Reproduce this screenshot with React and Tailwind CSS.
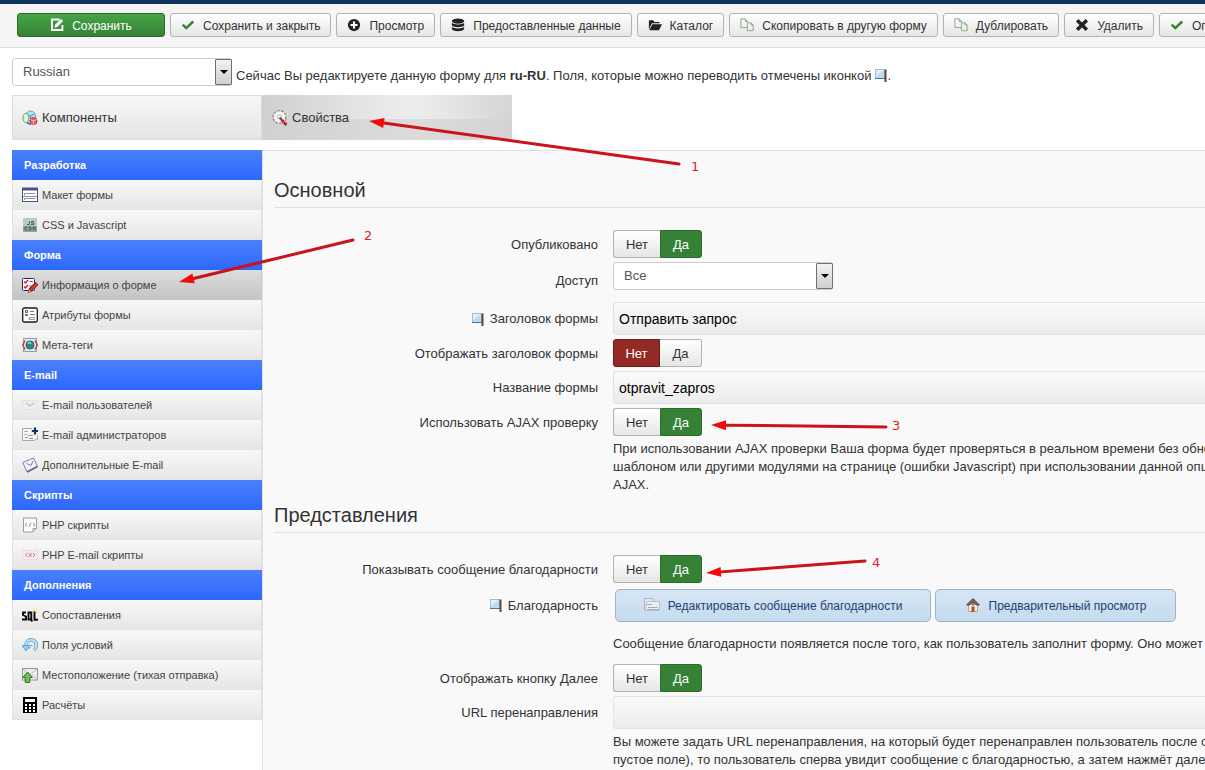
import { useState } from "react";

const svgProps = { width: 16, height: 16, viewBox: "0 0 16 16", fill: "none", "aria-hidden": true, className: "shrink-0" };

function EditIcon() {
  return (
    <svg {...svgProps} width={14} height={14}>
      <path d="M11 1.8H2.2v12h12V8" stroke="#fff" strokeWidth="2.2" />
      <path d="M5 11l.8-3.2L12.6 1 15 3.4 8.200 10.200z" fill="#fff" />
    </svg>
  );
}

function CheckIcon() {
  return (
    <svg {...svgProps} width={14} height={14}>
      <path d="M2 7.500l4 4L14 4" stroke="#378137" strokeWidth="2.800" />
    </svg>
  );
}

function PlusIcon() {
  return (
    <svg {...svgProps} width={14} height={14}>
      <circle cx="8" cy="8" r="7" fill="#222" />
      <path d="M8 4v8M4 8h8" stroke="#fff" strokeWidth="2.400" />
    </svg>
  );
}

function DatabaseIcon() {
  return (
    <svg {...svgProps} width={14} height={14}>
      <ellipse cx="8" cy="3.500" rx="7" ry="3" fill="#222" />
      <path d="M1 5.500c2 2.400 12 2.400 14 0v3c-2 2.600-12 2.600-14 0zM1 10c2 2.600 12 2.600 14 0v2.800c-2 3-12 3-14 0z" fill="#222" />
    </svg>
  );
}

function FolderIcon() {
  return (
    <svg {...svgProps} width={14} height={14}>
      <path d="M1 13V2.500h5l1.500 2H13V6H4.500L1 13z" fill="#222" />
      <path d="M1.500 14L5 7h11l-3.500 7z" fill="#222" />
    </svg>
  );
}

function CopyIcon() {
  return (
    <svg {...svgProps} width={14} height={14}>
      <path d="M8 11H1V1h5l2.500 2.500V5M6 1v3h2.500" stroke="#8a9a8a" />
      <path d="M8.500 5.500h4L15 8v6.500H8.500zM12.500 5.500V8H15" stroke="#7fa37f" />
    </svg>
  );
}

function CrossIcon() {
  return (
    <svg {...svgProps} width={14} height={14}>
      <path d="M2.500 2.500l11 11M13.500 2.500l-11 11" stroke="#222" strokeWidth="4" />
    </svg>
  );
}

function FlagIcon() {
  return (
    <svg width="12" height="13" viewBox="0 0 12 13" className="inline-block shrink-0" aria-hidden="true">
      <rect x="0.500" y="0.500" width="9" height="9" fill="#b9dcf3" stroke="#9dbfd6" />
      <path d="M0 9.500h10" stroke="#54728a" />
      <path d="M1 1h8L1 7z" fill="#dff0fb" />
      <path d="M10.500 0.500v12.500" stroke="#5f4530" strokeWidth="2" />
    </svg>
  );
}

function ComponentsIcon() {
  return (
    <svg {...svgProps}>
      <circle cx="8.500" cy="6" r="5" fill="#b9e2f5" stroke="#5fa5cb" />
      <path d="M5 4l3.500 2L12 4M8.500 6v5" stroke="#4b98c4" />
      <ellipse cx="4" cy="8" rx="3" ry="4.500" fill="#d6f0d2" stroke="#6dab74" />
      <path d="M3 5l1.500 2.500-.5 4" stroke="#fff" />
      <circle cx="11.500" cy="11" r="3.500" fill="#e0645e" stroke="#b53c3c" />
      <path d="M8.500 9.500l3 1.500 3-1.500M11.500 11v3.500" stroke="#f8c8c4" />
      <path d="M8.500 14.500l-3.500-2" stroke="#4f62b0" strokeWidth="1.500" />
    </svg>
  );
}

function PropertiesIcon() {
  return (
    <svg {...svgProps}>
      <circle cx="7.500" cy="7" r="6.300" fill="#f4f4f4" stroke="#8f8f8f" strokeWidth="1.600" strokeDasharray="2.600 1.200" />
      <circle cx="7.500" cy="7" r="5.500" fill="#f4f4f4" />
      <circle cx="7.500" cy="7" r="2" fill="#fff" stroke="#b5b5b5" />
      <path d="M7.500 7.500L11 11" stroke="#8f3a3a" strokeWidth="1.800" />
      <path d="M9.500 10l5 5" stroke="#b8242f" strokeWidth="3" />
      <path d="M14.500 9.500l-4 4" stroke="#c9898d" />
    </svg>
  );
}

function LayoutIcon() {
  return (
    <svg {...svgProps}>
      <rect x="0.500" y="1.500" width="15" height="13" fill="#fff" stroke="#4b5577" />
      <path d="M0 2h16" stroke="#4b5577" strokeWidth="3" />
      <path d="M2.500 8.500v-2h11M1 9.500h14M2.500 13v-1.500h11" stroke="#8b93ab" />
    </svg>
  );
}

function CssIcon() {
  return (
    <svg {...svgProps}>
      <rect x="1" y="1" width="14" height="14" fill="#b8c9c7" />
      <path d="M1 9h14v6H1z" fill="#93a7a5" />
      <path d="M7.500 4v3.500H5M12 4.500H9.500V6H12v1.500H9M5.500 10H3v3h2.500M9.500 10H7v1.500h2V13H6.500M13.500 10H11v1.500h2.500V13H10.500" stroke="#52615f" />
    </svg>
  );
}

function FormInfoIcon() {
  return (
    <svg {...svgProps}>
      <rect x="0.500" y="1.500" width="12" height="12" rx="1" fill="#fff" stroke="#2a2a52" />
      <path d="M2 4.500l1.500 1.500 2.500-3M2 9.500l1.500 1.500 2.500-3" stroke="#d0202a" strokeWidth="1.500" />
      <path d="M7.500 4.500H11M7.500 9H10" stroke="#7a5a8a" />
      <path d="M15 6.500L8 13" stroke="#6b1a1a" strokeWidth="4" />
      <path d="M14.500 7L8.500 12.600" stroke="#e0342c" strokeWidth="2.400" />
      <path d="M6 15.500l.8-3.500 2.400 2.500z" fill="#f3d9a0" stroke="#6b1a1a" strokeWidth="0.600" />
    </svg>
  );
}

function AttributesIcon() {
  return (
    <svg {...svgProps}>
      <rect x="0.700" y="1" width="14.600" height="14" rx="1.500" fill="#fff" stroke="#1c1c1c" strokeWidth="1.300" />
      <path d="M3.500 3.500h2v2h-2zM3.500 7.500h2v1h-2z" stroke="#555" />
      <path d="M8 4.500h4M8 7.500h5" stroke="#777" />
      <path d="M7 10.500h5.500v2H7z" stroke="#999" />
    </svg>
  );
}

function MetaIcon() {
  return (
    <svg {...svgProps}>
      <rect x="1.500" y="1.500" width="13" height="13" fill="#dbe8ee" stroke="#8aa0ad" />
      <circle cx="8" cy="8" r="4" fill="#2f8b8b" stroke="#1f5f6b" />
      <path d="M6 6.500c1-1.500 3-1 2.500.5" stroke="#9be0cc" strokeWidth="1.500" />
      <path d="M3 3.500L.8 8 3 12.500M13 3.500L15.200 8 13 12.500" stroke="#cc3232" strokeWidth="1.400" />
    </svg>
  );
}

function MailUserIcon() {
  return (
    <svg {...svgProps}>
      <rect x="0.500" y="3.500" width="15" height="9" fill="#eeeeee" stroke="#e2e2e2" />
      <path d="M4 6l4 3 4-3" stroke="#bdbdbd" strokeWidth="1.300" />
    </svg>
  );
}

function MailAdminIcon() {
  return (
    <svg {...svgProps}>
      <path d="M10 1.500H.5v12h12l3-3V8" fill="#f6f6f6" stroke="#a9a9a9" />
      <path d="M15.500 8v5" stroke="#a9b8c8" />
      <path d="M2.500 4.500h3M2.500 7.500h2M6 8.500h5M3 10.500h3M7 11.500h4" stroke="#8f98a4" />
      <path d="M13 .5v7M9.800 4h6.200" stroke="#15306b" strokeWidth="2.200" />
    </svg>
  );
}

function MailExtraIcon() {
  return (
    <svg {...svgProps}>
      <path d="M.8 5.500L11.500 1l4 8.500L5 15z" fill="#f2f2fc" stroke="#8080a8" />
      <path d="M4.500 6.500l4.500 2L11 4" stroke="#7f7fb0" />
      <path d="M5 15l10.500-5.500" stroke="#62629c" strokeWidth="1.800" />
    </svg>
  );
}

function PhpIcon() {
  return (
    <svg {...svgProps}>
      <path d="M1.500 1h13v10.500l-3.500 3.500H1.500z" fill="#fbfbfb" stroke="#9c9c9c" />
      <path d="M11 15v-3.500h3.500" fill="#ddd" stroke="#9c9c9c" />
      <path d="M5 6L3 7.800 5 9.500M11 6l2 1.800L11 9.500M9 5.500L7 10" stroke="#c08484" />
    </svg>
  );
}

function PhpMailIcon() {
  return (
    <svg {...svgProps}>
      <rect x="0.500" y="3.500" width="15" height="9" fill="#f6e9ea" stroke="#ecdfe1" />
      <path d="M5.500 6L3.500 8l2 2M11 6l2 2-2 2M9.500 6L7 10M7 6.500l2.500 3" stroke="#c07a88" />
    </svg>
  );
}

function SqlIcon() {
  return (
    <svg {...svgProps}>
      <circle cx="13" cy="3.500" r="3" fill="#f7ecc0" />
      <path d="M4 5.500H1v2.500l3 1.500v3H0" stroke="#0a0a0a" strokeWidth="1.900" />
      <path d="M6.500 5.500h2.800v7H6.500zM8.500 12l1.800 2.500" stroke="#0a0a0a" strokeWidth="1.900" />
      <path d="M12.500 4.500v8.200H16" stroke="#0a0a0a" strokeWidth="1.900" />
    </svg>
  );
}

function ConditionIcon() {
  return (
    <svg {...svgProps}>
      <path d="M4 9.500C3.500 4 8 2 11 3.200c4 1.600 4.300 7.300 1 10.300" stroke="#5fa8d6" strokeWidth="3.600" />
      <path d="M4 9.500C3.500 4 8 2 11 3.200c4 1.600 4.300 7.300 1 10.300" stroke="#c4e4f6" strokeWidth="1.800" />
      <path d="M0 8.500h8L4 14z" fill="#8ecbed" stroke="#5fa8d6" />
      <path d="M7.500 12V8.500h3" stroke="#79b7de" strokeWidth="1.500" />
    </svg>
  );
}

function LocationIcon() {
  return (
    <svg {...svgProps}>
      <rect x="0.500" y="1.500" width="15" height="11.500" fill="#eceeee" stroke="#8f9c93" />
      <path d="M1 2l7 5.500L15 2M15 12.500L10 7" stroke="#b6c0ba" />
      <path d="M5.500 5L10.500 10.500H7.800V15.500H3.200v-5H.8z" fill="#6fc04c" stroke="#35722b" />
    </svg>
  );
}

function CalcIcon() {
  return (
    <svg {...svgProps}>
      <path d="M1 0h14v16H1z" fill="#000" />
      <path d="M3 2h10v3H3zM3 7h2v2H3zM7 7h2v2H7zM11 7h2v2h-2zM3 10h2v2H3zM7 10h2v2H7zM11 10h2v2h-2zM3 13h2v2H3zM7 13h2v2H7zM11 13h2v2h-2z" fill="#fff" />
    </svg>
  );
}

function MessageIcon() {
  return (
    <svg {...svgProps}>
      <path d="M.5 13.500V1.500h8l2 2.500" fill="#dfe7ee" stroke="#a9b4bd" />
      <path d="M3 4.500h12.500v9H1z" fill="#e9eef2" stroke="#b8c2ca" />
      <path d="M3 7.500h5M4 10.500h10M3 12.500h12" stroke="#a3afb9" />
    </svg>
  );
}

function HomeIcon() {
  return (
    <svg {...svgProps}>
      <path d="M3.500 7h9v7.500h-9z" fill="#f6eee2" stroke="#b9a68c" />
      <path d="M1.500 8L8 1.500 14.500 8h-3L8 5 4.500 8z" fill="#75655d" stroke="#5b4a42" />
      <path d="M6.500 9.500H9.500V15H6.500z" fill="#a5502e" />
      <circle cx="8" cy="7.500" r="1" fill="#5b4a42" />
    </svg>
  );
}

const toolbar = [
  { label: "Сохранить и закрыть", icon: CheckIcon },
  { label: "Просмотр", icon: PlusIcon },
  { label: "Предоставленные данные", icon: DatabaseIcon },
  { label: "Каталог", icon: FolderIcon },
  { label: "Скопировать в другую форму", icon: CopyIcon },
  { label: "Дублировать", icon: CopyIcon },
  { label: "Удалить", icon: CrossIcon },
  { label: "Опубликовать", icon: CheckIcon },
];

const menu = [
  {
    title: "Разработка",
    items: [
      { label: "Макет формы", icon: LayoutIcon },
      { label: "CSS и Javascript", icon: CssIcon },
    ],
  },
  {
    title: "Форма",
    items: [
      { label: "Информация о форме", icon: FormInfoIcon, active: true },
      { label: "Атрибуты формы", icon: AttributesIcon },
      { label: "Мета-теги", icon: MetaIcon },
    ],
  },
  {
    title: "E-mail",
    items: [
      { label: "E-mail пользователей", icon: MailUserIcon },
      { label: "E-mail администраторов", icon: MailAdminIcon },
      { label: "Дополнительные E-mail", icon: MailExtraIcon },
    ],
  },
  {
    title: "Скрипты",
    items: [
      { label: "PHP скрипты", icon: PhpIcon },
      { label: "PHP E-mail скрипты", icon: PhpMailIcon },
    ],
  },
  {
    title: "Дополнения",
    items: [
      { label: "Сопоставления", icon: SqlIcon },
      { label: "Поля условий", icon: ConditionIcon },
      { label: "Местоположение (тихая отправка)", icon: LocationIcon },
      { label: "Расчёты", icon: CalcIcon },
    ],
  },
];

function Toolbar() {
  return (
    <header className="border-t-4 border-b border-t-[#12355f] border-b-[#dcdcdc] bg-[#f5f5f5] pt-[9px] pb-[10px] pl-[17px] overflow-hidden">
      <div className="flex gap-[5px] text-[12px] whitespace-nowrap">
        <button className="flex h-6 w-[148px] shrink-0 items-center justify-center gap-2 rounded-[3px] border border-[#2b6d2b] bg-linear-to-b from-[#46a546] to-[#378137] text-white">
          <EditIcon />
          <span className="pt-px">Сохранить</span>
        </button>
        {toolbar.map(({ label, icon: Icon }) => (
          <button
            key={label}
            className="flex h-6 shrink-0 items-center gap-2 rounded-[3px] border border-[#b3b3b3] bg-linear-to-b from-white to-[#e6e6e6] px-[10px]"
          >
            <Icon />
            <span className="pt-px">{label}</span>
          </button>
        ))}
      </div>
    </header>
  );
}

function Select({ id, label, value }) {
  return (
    <div className="relative w-[220px] shrink-0">
      <select
        id={id}
        aria-label={label}
        defaultValue={value}
        className="block h-7 w-full appearance-none rounded-[3px] border border-[#ccc] bg-white pl-[10px] text-[#555]"
      >
        <option>{value}</option>
      </select>
      <span className="pointer-events-none absolute top-px right-0 flex h-[26px] w-[17px] items-center justify-center rounded-[1px] border border-[#707070] bg-linear-to-b from-[#f2f2f2] to-[#cfcfcf]">
        <span className="border-x-4 border-t-4 border-x-transparent border-t-black" />
      </span>
    </div>
  );
}

function Tabs() {
  return (
    <nav className="flex h-[45px] text-[#333]">
      <a href="#components" className="flex w-[250px] items-center gap-1 border border-[#dcdcdc] bg-linear-to-b from-[#f7f7f7] to-[#e5e5e5] pl-[9px]">
        <ComponentsIcon />
        <span className="pt-px">Компоненты</span>
      </a>
      <a
        href="#properties"
        className="flex w-[250px] items-center gap-1 bg-[linear-gradient(to_bottom,transparent_53%,#d2d2d2aa_53%),linear-gradient(to_right,#d0cfd0,#ececec_55%,#ececec_65%,#d6d5d6)] pl-[10px]"
      >
        <PropertiesIcon />
        <span className="pt-px">Свойства</span>
      </a>
    </nav>
  );
}

function Sidebar() {
  return (
    <nav className="w-[250px] shrink-0 self-start text-[11px]">
      {menu.map((group) => (
        <section key={group.title}>
          <h2 className="flex h-[30px] items-center bg-linear-to-b from-[#4a80fb] to-[#2d67fb] pl-3 font-bold text-white">
            {group.title}
          </h2>
          {group.items.map(({ label, icon: Icon, active }) => (
            <a
              key={label}
              href="#menu"
              className={
                active
                  ? "flex h-[30px] items-center gap-1 border-x border-b border-[#c8c8c8] bg-linear-to-b from-[#dedede] to-[#c4c4c4] pl-[9px] text-[#444]"
                  : "flex h-[30px] items-center gap-1 border-x border-b border-[#e2e2e2] bg-linear-to-b from-[#f8f8f8] to-[#e6e6e6] pl-[9px] text-[#444]"
              }
            >
              <Icon />
              <span className="pt-[2px]">{label}</span>
            </a>
          ))}
        </section>
      ))}
    </nav>
  );
}

function Heading({ children }) {
  return (
    <h3 className="mb-[22px] border-b border-[#e0e0e0] pt-2 pb-1 text-[20px] leading-[26px] text-[#333]">
      {children}
    </h3>
  );
}

function Row({ label, htmlFor, flag, tall, children }) {
  return (
    <div className={tall ? "flex h-9 gap-[15px]" : "flex gap-[15px]"}>
      <label htmlFor={htmlFor} className="flex w-[324px] shrink-0 items-center justify-end gap-[6px] pt-px">
        {flag && <FlagIcon />}
        {label}
      </label>
      {children}
    </div>
  );
}

function Help({ children }) {
  return <p className="mt-1 ml-[339px] leading-[18px] whitespace-nowrap">{children}</p>;
}

function YesNo({ id, initial }) {
  const [on, setOn] = useState(initial);
  return (
    <div id={id} className="flex h-7">
      <button
        onClick={() => setOn(false)}
        className={
          on
            ? "w-[47px] rounded-l-[3px] border border-r-0 border-[#b3b3b3] bg-linear-to-b from-white to-[#e6e6e6] pt-px"
            : "w-[47px] rounded-l-[3px] border border-[#6b1a16] bg-[#942a25] pt-px text-white"
        }
      >
        Нет
      </button>
      <button
        onClick={() => setOn(true)}
        className={
          on
            ? "w-[42px] rounded-r-[3px] border border-[#2b6d2b] bg-[#378137] pt-px text-white"
            : "w-[42px] rounded-r-[3px] border border-l-0 border-[#b3b3b3] bg-linear-to-b from-white to-[#e6e6e6] pt-px"
        }
      >
        Да
      </button>
    </div>
  );
}

function TextInput({ id, value }) {
  return (
    <input
      id={id}
      type="text"
      defaultValue={value}
      className="h-[33px] min-w-0 flex-1 rounded-l-[3px] border border-r-0 border-[#e2e2e2] bg-linear-to-b from-[#fafafa] to-[#ececec] px-[5px] text-[14px] text-black"
    />
  );
}

function ActionButton({ icon: Icon, children, className }) {
  return (
    <button className={`flex h-[33px] shrink-0 items-center justify-center gap-2 rounded-[5px] border border-[#9db3ca] bg-linear-to-b from-[#d6e6f4] to-[#c5dbef] text-[12px] text-[#1f3f73] ${className}`}>
      <Icon />
      <span className="pt-px">{children}</span>
    </button>
  );
}

// Red callouts: arrow head at (x1, y1), tail at (x2, y2)
const callouts = [
  { n: 1, x1: 369, y1: 121, x2: 679, y2: 164, tx: 691, ty: 171 },
  { n: 2, x1: 179, y1: 282, x2: 353, y2: 240, tx: 364, ty: 240 },
  { n: 3, x1: 711, y1: 425, x2: 886, y2: 427, tx: 892, ty: 430 },
  { n: 4, x1: 706, y1: 573, x2: 865, y2: 561, tx: 872, ty: 567 },
];

function Callouts() {
  return (
    <svg className="pointer-events-none absolute top-0 left-0" width="1205" height="770" aria-hidden="true">
      {callouts.map(({ n, x1, y1, x2, y2, tx, ty }) => {
        const len = Math.hypot(x2 - x1, y2 - y1);
        const ux = (x2 - x1) / len;
        const uy = (y2 - y1) / len;
        const bx = x1 + ux * 15;
        const by = y1 + uy * 15;
        return (
          <g key={n}>
            <path d={`M${bx} ${by}L${x2} ${y2}`} stroke="#c8141a" strokeWidth="3" strokeLinecap="round" />
            <path d={`M${x1} ${y1}L${bx - uy * 5} ${by + ux * 5}L${bx + uy * 5} ${by - ux * 5}z`} fill="#f00a0a" />
            <text x={tx} y={ty} fill="#d8232a" className="font-['DejaVu_Sans',sans-serif] text-[13px]">
              {n}
            </text>
          </g>
        );
      })}
    </svg>
  );
}

export default function App() {
  return (
    <div className="relative flex h-screen flex-col overflow-hidden bg-white font-['Liberation_Sans',Arial,sans-serif] text-[13px] text-[#333]">
      <Toolbar />
      <div className="flex items-center gap-1 pt-[10px] pb-[9px] pl-3">
        <Select label="Язык" value="Russian" />
        <p className="flex items-center pt-[7px] whitespace-nowrap">
          <span>
            Сейчас Вы редактируете данную форму для <b>ru-RU</b>. Поля, которые можно переводить отмечены иконкой
          </span>
          <span className="ml-1 flex items-center">
            <FlagIcon />.
          </span>
        </p>
      </div>
      <div className="pb-[10px] pl-3">
        <Tabs />
      </div>
      <div className="flex min-h-0 flex-1 pl-3">
        <Sidebar />
        <main className="min-w-0 flex-1 overflow-hidden border-t border-l border-[#e0e0e0] bg-[#f9f9f9] pt-[18px] pl-[11px]">
          <Heading>Основной</Heading>
          <div className="flex flex-col gap-1">
            <Row label="Опубликовано" htmlFor="published">
              <YesNo id="published" initial={true} />
            </Row>
            <Row label="Доступ" htmlFor="access" tall>
              <Select id="access" value="Все" />
            </Row>
            <Row label="Заголовок формы" htmlFor="title" flag>
              <TextInput id="title" value="Отправить запрос" />
            </Row>
            <Row label="Отображать заголовок формы" htmlFor="show-title">
              <YesNo id="show-title" initial={false} />
            </Row>
            <Row label="Название формы" htmlFor="name">
              <TextInput id="name" value="otpravit_zapros" />
            </Row>
            <div>
              <Row label="Использовать AJAX проверку" htmlFor="ajax">
                <YesNo id="ajax" initial={true} />
              </Row>
              <Help>
                При использовании AJAX проверки Ваша форма будет проверяться в реальном времени без обновления
                <br />
                шаблоном или другими модулями на странице (ошибки Javascript) при использовании данной опции
                <br />
                AJAX.
              </Help>
            </div>
          </div>

          <Heading>Представления</Heading>
          <div className="flex flex-col gap-1">
            <Row label="Показывать сообщение благодарности" htmlFor="show-thanks">
              <YesNo id="show-thanks" initial={true} />
            </Row>
            <div>
              <Row label="Благодарность" flag tall>
                <div className="flex items-center gap-1 pl-[2px] whitespace-nowrap">
                  <ActionButton icon={MessageIcon} className="w-[316px]">
                    Редактировать сообщение благодарности
                  </ActionButton>
                  <ActionButton icon={HomeIcon} className="w-[241px]">
                    Предварительный просмотр
                  </ActionButton>
                </div>
              </Row>
              <div className="pt-2 pb-[7px]">
                <Help>
                  Сообщение благодарности появляется после того, как пользователь заполнит форму. Оно может быть
                </Help>
              </div>
            </div>
            <Row label="Отображать кнопку Далее" htmlFor="continue">
              <YesNo id="continue" initial={true} />
            </Row>
            <div>
              <Row label="URL перенаправления" htmlFor="url">
                <TextInput id="url" value="" />
              </Row>
              <Help>
                Вы можете задать URL перенаправления, на который будет перенаправлен пользователь после отправки
                <br />
                пустое поле), то пользователь сперва увидит сообщение с благодарностью, а затем нажмёт далее
              </Help>
            </div>
          </div>
        </main>
      </div>
      <Callouts />
    </div>
  );
}
